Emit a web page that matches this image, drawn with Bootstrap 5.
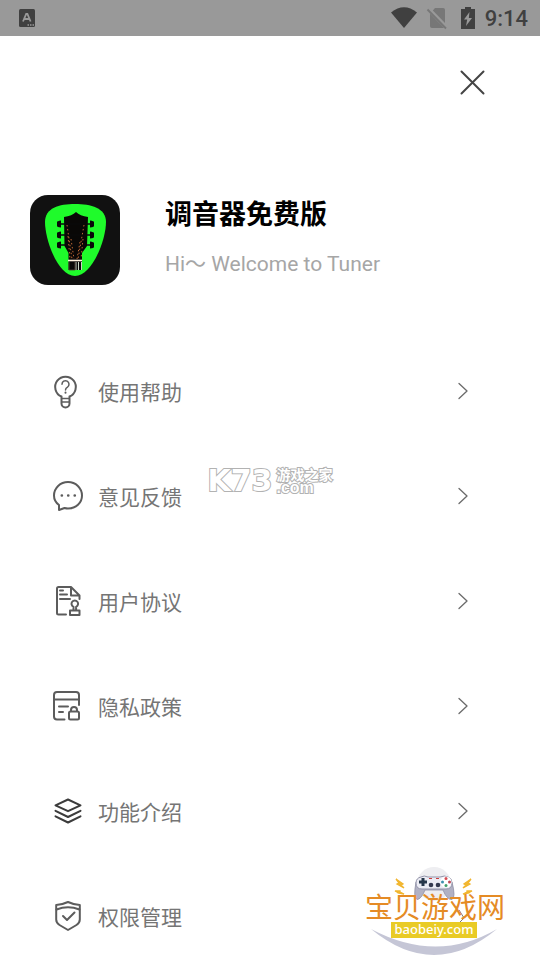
<!DOCTYPE html>
<html lang="zh-CN">
<head>
<meta charset="utf-8">
<meta name="viewport" content="width=device-width, initial-scale=1">
<title>调音器免费版</title>
<link href="https://cdn.jsdelivr.net/npm/bootstrap@5.3.0/dist/css/bootstrap.min.css" rel="stylesheet">
<style>
body{font-family:Roboto,"Noto Sans CJK SC",sans-serif;background:#fff;color:#757575}
svg{display:block;overflow:visible;flex:none}
.status-bar{height:36px;padding:0 12px 0 18px;background:#999;color:#404040}
.status-icons{gap:10px}
.clock{font-size:22px;line-height:36px;font-weight:500;padding-top:2px}
.close-row{padding:34px 55px 0 0}
.profile{margin-top:100px;padding:0 30px;gap:45px}
.profile-text{padding-top:2px}
.app-title{font-size:27px;line-height:36px;font-weight:700;color:#000}
.app-sub{font-size:21px;line-height:30px;color:#a6a6a6}
.menu{margin-top:91px;padding:0 72px 0 53px;gap:75px}
.menu-link{height:30px;gap:15px;font-size:21px;line-height:30px;color:#757575}
.menu-link span{padding-top:2px}
.line{fill:none;stroke:#5c5c5c;stroke-width:2;stroke-linecap:round;stroke-linejoin:round}
.chevron{fill:none;stroke:#6a6a6a;stroke-width:1.3;stroke-linecap:round;stroke-linejoin:round}
.watermark{top:465px;left:0;right:0;gap:4px;pointer-events:none}
.outlined{color:#fff;-webkit-text-stroke:2px #b2b2b2;paint-order:stroke fill;font-weight:700}
.wm-big{font:700 30px/32px "DejaVu Sans",sans-serif}
.wm-small{font-size:14px;line-height:14px}
.wm-com{font:700 16px/12px "Liberation Sans",sans-serif}
.site-badge{right:25px;top:860px;pointer-events:none}
</style>
<script src="https://cdn.jsdelivr.net/npm/bootstrap@5.3.0/dist/js/bootstrap.bundle.min.js"></script>
</head>
<body>
<div class="position-relative min-vh-100">
<div class="status-bar d-flex align-items-center">
  <svg width="18" height="18" viewBox="0 0 18 18"><rect x="1" width="16" height="18" rx="1.500" fill="#404040"/><path d="M5 12.500 8.200 5h1.200l3.200 7.500M6.300 10h5" fill="none" stroke="#999" stroke-width="1.800"/><path d="M9.500 16h1.500m1 0h1.500m1 0H16" stroke="#999" stroke-width="1.300"/></svg>
  <div class="status-icons ms-auto d-flex align-items-center">
    <svg width="26" height="22" viewBox="0 0 26 22"><path d="M0 5.500Q13-5 26 5.500L13 21Z" fill="#404040"/></svg>
    <svg width="20" height="22" viewBox="0 0 20 22"><path d="M8 1h8q2 0 2 2v16q0 2-2 2H5q-2 0-2-2V7z" fill="#777"/><path d="M1 1.500 19.500 20.500" stroke="#999" stroke-width="4"/><path d="M.5 2.500 19 21.500" stroke="#777" stroke-width="1.800"/></svg>
    <svg class="ms-1" width="14" height="22" viewBox="0 0 14 22"><path d="M4 0h6v2h4v20H0V2h4z" fill="#404040"/><path d="M8.500 5 3 12.500h3.200L5 19l6-8H7.800z" fill="#999"/></svg>
    <span class="clock">9:14</span>
  </div>
</div>
<div class="close-row d-flex justify-content-end">
  <button type="button" class="btn p-0 border-0" aria-label="关闭"><svg width="25" height="25" viewBox="0 0 25 25"><path d="m1.500 1.500 22 22m0-22-22 22" stroke="#444" stroke-width="2" stroke-linecap="round"/></svg></button>
</div>
<header class="profile d-flex">
  <svg width="90" height="90" viewBox="0 0 90 90"><rect width="90" height="90" rx="18" fill="#111"/>
    <path d="M45 9C61 9 76 13 76 27 76 45 62 81 45 81S15 45 15 27C15 13 29 9 45 9Z" fill="#1ffb2b"/>
    <path d="M34 22Q42 21 46 17 50 21 58 22L57 51 52 58V75H38.500V58L34.500 51Z" fill="#090706"/>
    <path d="M31 29h30M31 40h30M31 50h30" stroke="#0a0a0a" stroke-width="1.500"/>
    <path d="M27 27q0-1 4-1.500v7q-4-.5-4-1.500zm0 11q0-1 4-1.500v7q-4-.5-4-1.500zm0 10q0-1 4-1.500v7q-4-.5-4-1.500zM64 27q0-1-4-1.500v7q4-.5 4-1.500zm0 11q0-1-4-1.500v7q4-.5 4-1.500zm0 10q0-1-4-1.500v7q4-.5 4-1.500z" fill="#0a0a0a"/>
    <path d="M37 30 42 64M38 41l2 23M41 44l3 20M54 30 48 64M53 44l-2 20M50 47l-3 17" fill="none" stroke="#bd6634" stroke-width="1" stroke-dasharray="1.500 2.500"/>
    <path d="M38 65.500h14" stroke="#fff1dd" stroke-width="1.600"/><path d="M46 67v8m2.500-8v8m3-8v8" stroke="#c9d5c5" stroke-width="1"/><path d="M39 67v8h6v-8" fill="none" stroke="#56453b" stroke-width=".8"/>
  </svg>
  <div class="profile-text">
    <h1 class="app-title mb-0">调音器免费版</h1>
    <p class="app-sub mb-0 mt-3">Hi～ Welcome to Tuner</p>
  </div>
</header>
<nav class="menu d-flex flex-column">
  <a href="#help" class="menu-link d-flex text-decoration-none">
    <svg width="30" height="30" viewBox="0 0 30 30"><g class="line"><path d="M8.500 20.500A10.300 10.300 0 1 1 16.500 20.500V27.500a4 4 0 0 1-8 0Z"/><path d="M9 22.500h7M9 26h7" stroke-width="1.500"/><path d="M9 8.200a3.500 3.500 0 1 1 5.500 2.900Q12.500 12.200 12.500 14" stroke-width="1.500"/><path d="M12.500 16.500v.2"/></g></svg>
    <span>使用帮助</span><svg class="ms-auto" width="10" height="30" viewBox="0 0 10 30"><path class="chevron" d="m1 7.500 8 7.500-8 7.500"/></svg></a>
  <a href="#feedback" class="menu-link d-flex text-decoration-none">
    <svg width="30" height="30" viewBox="0 0 30 30"><g class="line"><path d="M6 24C2.500 21.500 1 18 1 14.500 1 7 7.300 1 15 1s14 6 14 13.500S23 27.500 15 27.500q-1.800 0-3.500-.5L6 29Z"/><path d="M8.800 14.500h.1M15.200 14.500h.1M21.700 14.500h.1" stroke-width="2.600"/></g></svg>
    <span>意见反馈</span><svg class="ms-auto" width="10" height="30" viewBox="0 0 10 30"><path class="chevron" d="m1 7.500 8 7.500-8 7.500"/></svg></a>
  <a href="#terms" class="menu-link d-flex text-decoration-none">
    <svg width="30" height="30" viewBox="0 0 30 30"><g class="line"><path d="M13 28.500H5.500Q4 28.500 4 27V2.500Q4 1 5.500 1H18l8.500 8.500V13M18 1v8.500h8.500M7 4.500h3M7 8.500h7M7 13h10"/><path d="M20.500 24.500V20.800a3.300 3.300 0 1 1 2.600 0V24.500M17 24.500h9.500v4.500H17z"/></g></svg>
    <span>用户协议</span><svg class="ms-auto" width="10" height="30" viewBox="0 0 10 30"><path class="chevron" d="m1 7.500 8 7.500-8 7.500"/></svg></a>
  <a href="#privacy" class="menu-link d-flex text-decoration-none">
    <svg width="30" height="30" viewBox="0 0 30 30"><g class="line"><path d="M11.500 28.500H4Q1 28.500 1 25.500V4Q1 1 4 1H23q3 0 3 3V14M1 8.500h25M6 15.500h9M6 21h4"/><path d="M16 22q0-1.500 1.500-1.500h7Q26 20.500 26 22v5q0 1.500-1.500 1.500h-7Q16 28.500 16 27zM18 20v-1a3 3 0 0 1 6 0v1"/></g></svg>
    <span>隐私政策</span><svg class="ms-auto" width="10" height="30" viewBox="0 0 10 30"><path class="chevron" d="m1 7.500 8 7.500-8 7.500"/></svg></a>
  <a href="#features" class="menu-link d-flex text-decoration-none">
    <svg width="30" height="30" viewBox="0 0 30 30"><path class="line" style="stroke:#3c3c3c" d="M15 3.500 27.500 9.300 15 15.200 2.500 9.300ZM2.500 14.800 15 21l12.500-6.200M2.500 20.300 15 26.500l12.500-6.200"/></svg>
    <span>功能介绍</span><svg class="ms-auto" width="10" height="30" viewBox="0 0 10 30"><path class="chevron" d="m1 7.500 8 7.500-8 7.500"/></svg></a>
  <a href="#permissions" class="menu-link d-flex text-decoration-none">
    <svg width="30" height="30" viewBox="0 0 30 30"><g class="line"><path d="M15 1Q21 3.800 26.800 4V18.500Q26.800 22 23.500 24L15 29 6.500 24Q3.200 22 3.200 18.500V4Q9 3.800 15 1Z"/><path d="M3.500 8.500Q15 4 26.500 8.500M10 15l4 4 7.500-7.500"/></g></svg>
    <span>权限管理</span></a>
</nav>
<div class="watermark position-absolute d-flex justify-content-center align-items-center">
  <span class="outlined wm-big">K73</span>
  <span class="d-flex flex-column outlined wm-small"><span>游戏之家</span><span class="wm-com">.com</span></span>
</div>
<div class="site-badge position-absolute">
  <svg width="160" height="98" viewBox="0 0 160 98">
    <circle cx="79" cy="24" r="17" fill="#eeeef1"/>
    <path d="M16 69Q79 121 142 69 82 104 16 69Z" fill="#c5c6d6"/>
    <path d="M61 22Q58 38 62 39.500q4 0 8-9.500h18q4 10 9 9.500 4-2 0-17.500Z" fill="#b1b1c3" stroke="#8f90a6" stroke-width=".8"/>
    <path d="M66 17q3-2 7 0h12q5-2 8 0 4 1 4 6 0 6-6 6H67q-6 0-6-6 0-5 5-6Z" fill="#ececf4" stroke="#9394a9"/>
    <path d="M64 22h8m-4-4v8" stroke="#26374a" stroke-width="3"/><circle cx="91" cy="22" r="5.500" fill="#fff"/><circle cx="91" cy="18.500" r="1.500" fill="#d64c53"/><circle cx="87.500" cy="22" r="1.500" fill="#3c91ae"/><circle cx="94.500" cy="22" r="1.500" fill="#bd4755"/><circle cx="91" cy="25.500" r="1.500" fill="#42a06d"/><circle cx="76" cy="25" r="2.300" fill="#34394f"/><circle cx="83" cy="25" r="2.300" fill="#34394f"/><path d="M74 18.500h3m4 0h3" stroke="#cb3d3b"/>
    <path d="m41 19 7 5-2 1 3 3-7-4 2-1zm-1 12h5v1l4 2-6-1-1-1zm76-12-7 5 2 1-3 3 7-4-2-1zm1 12h-5v1l-4 2 6-1 1-1z" fill="#f4ba35" stroke="#f1b52e" stroke-width="1.300"/>
    <path d="m104 50 5 8-4 4" fill="none" stroke="#777" stroke-width="1"/>
    <text x="10" y="58" font-family="Noto Sans CJK SC, sans-serif" font-size="28" font-weight="400" fill="#e58b25">宝贝游戏网</text>
    <rect x="36" y="62" width="86" height="16" fill="#e9cb26"/>
    <text x="79" y="74" text-anchor="middle" font-family="Noto Sans, sans-serif" font-size="13" font-weight="500" fill="#fff">baobeiy.com</text>
  </svg>
</div>
</div>
</body>
</html>
